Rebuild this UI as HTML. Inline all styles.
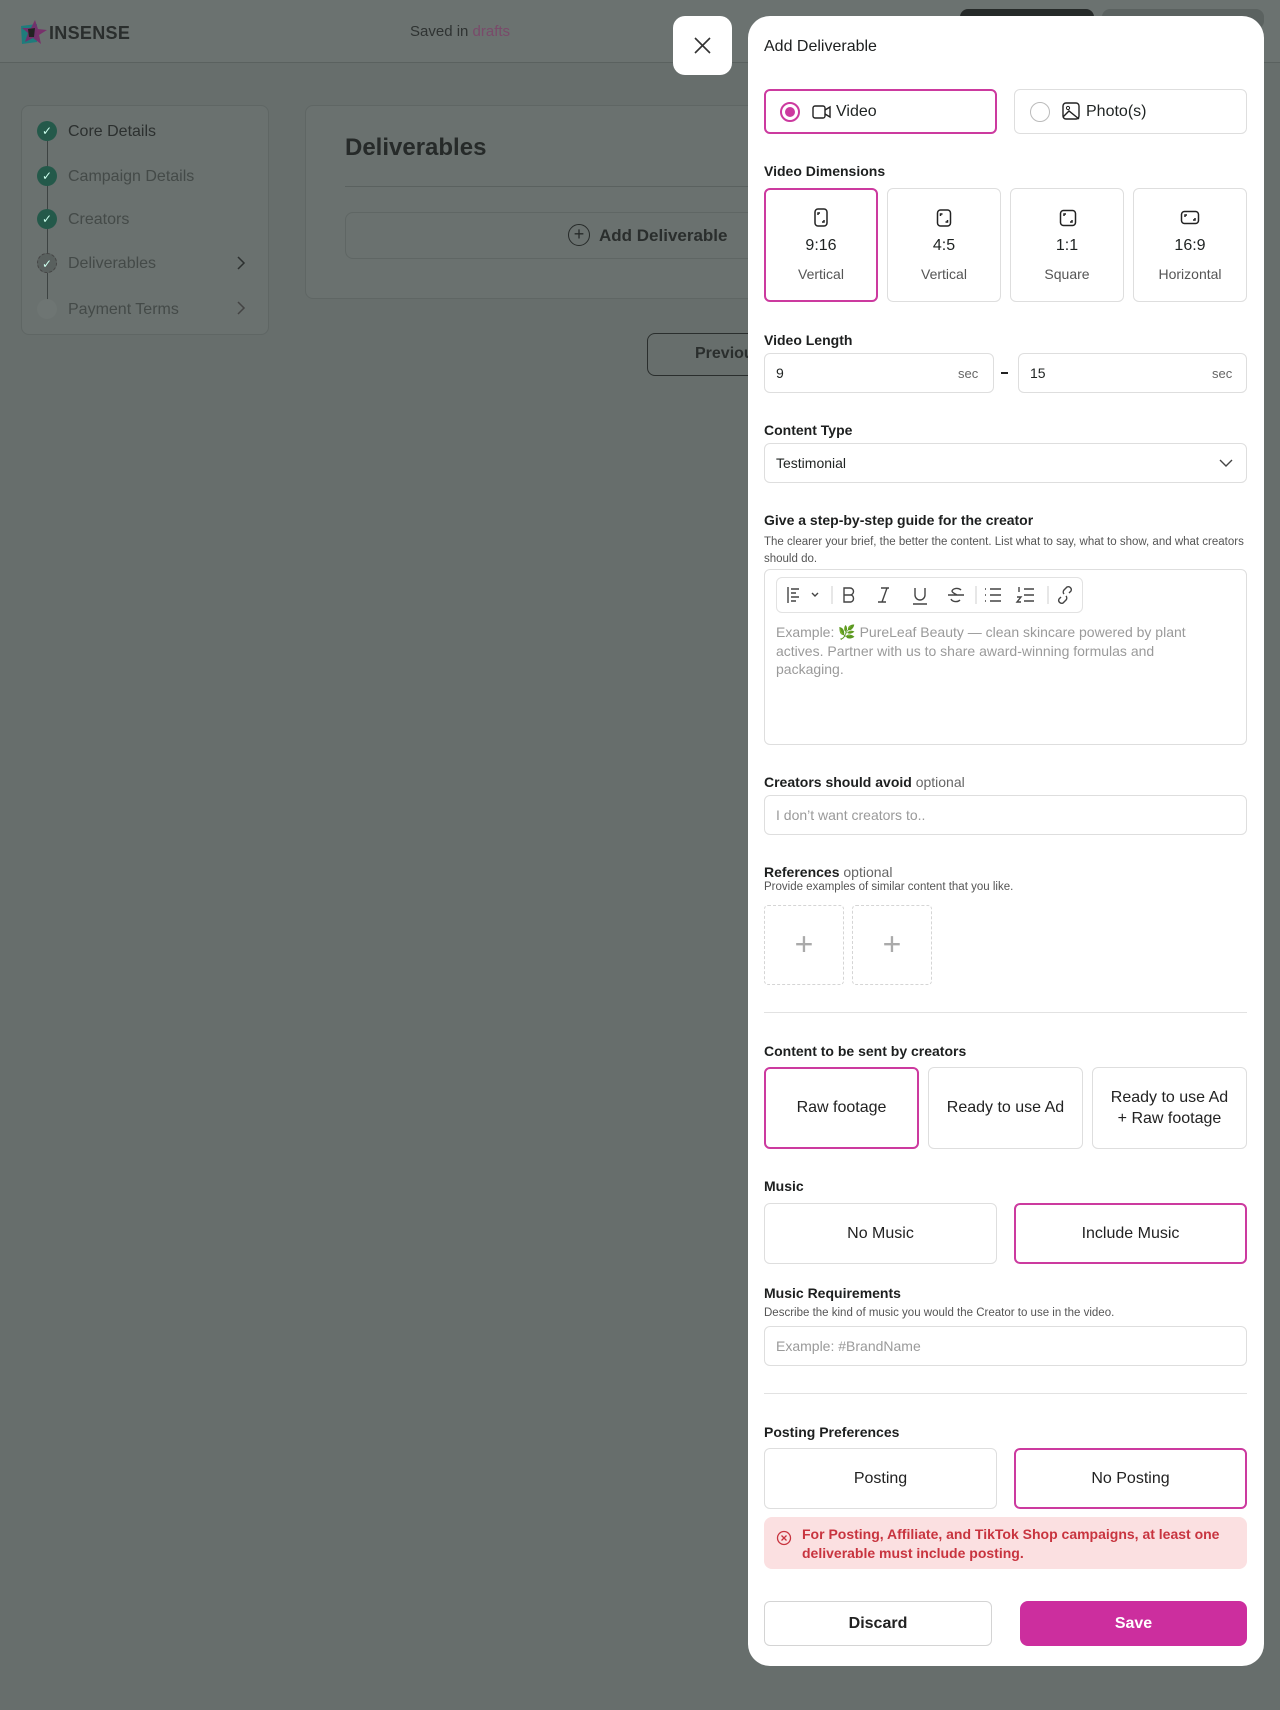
<!DOCTYPE html>
<html><head><meta charset="utf-8"><style>
*{box-sizing:border-box;margin:0;padding:0}
body{width:1280px;height:1710px;background:#676e6c;font-family:"Liberation Sans",sans-serif;position:relative;overflow:hidden;color:#1f2322}
.a{position:absolute}
.hdr{left:0;top:0;width:1280px;height:63px;background:#6b7270;border-bottom:1px solid #5a615f}
.card{background:#6a716f;border:1px solid #5f6664;border-radius:8px}
.dot{width:20px;height:20px;border-radius:50%;background:#24594a;color:#cfe;font-size:12px;text-align:center;line-height:20px}
.side{font-size:16px;color:#2c302f}
.modal{left:748px;top:16px;width:516px;height:1650px;background:#fff;border-radius:22px}
.lbl{font-size:14px;font-weight:bold;color:#1d1f1f}
.box{border:1px solid #dedede;border-radius:6px;background:#fff}
.sel{border:2px solid #cc3a9f}
.c{display:flex;align-items:center;justify-content:center;text-align:center;font-size:16px;color:#222}
.sm{font-size:11.5px;color:#555}
.ph{color:#9a9a9a}
.opt{font-weight:normal;color:#666}
</style></head><body>
<div class="a hdr"></div>
<svg class="a" style="left:19px;top:20px" width="28" height="26" viewBox="0 0 28 26"><polygon points="2,6 18,4 18,22 3,24" fill="#1f7c7c"/><polygon points="16,0 19,9 28,10 20,15 22,24 14,18 6,22 9,13 3,8 12,8" fill="#7a2a6a" opacity=".9"/><polygon points="9,9 16,8 15,17 10,17" fill="#222"/></svg>
<div class="a" style="left:49px;top:23px;font-size:18px;font-weight:bold;color:#2a2e2d;letter-spacing:.3px">INSENSE</div>
<div class="a" style="left:410px;top:23px;font-size:15px;color:#2f3332">Saved in <span style="color:#7a4a6a">drafts</span></div>
<div class="a" style="left:960px;top:9px;width:134px;height:20px;background:#262a29;border-radius:8px"></div>
<div class="a" style="left:1102px;top:9px;width:162px;height:20px;background:#5b6260;border-radius:8px"></div>

<div class="a card" style="left:21px;top:105px;width:248px;height:230px"></div>
<div class="a" style="left:47px;top:141px;width:1px;height:160px;background:#3d4342"></div>
<div class="a dot" style="left:37px;top:121px">✓</div><div class="a side" style="left:68px;top:123px">Core Details</div>
<div class="a dot" style="left:37px;top:166px">✓</div><div class="a side" style="left:68px;top:168px;color:#444a48">Campaign Details</div>
<div class="a dot" style="left:37px;top:209px">✓</div><div class="a side" style="left:68px;top:211px;color:#444a48">Creators</div>
<div class="a dot" style="left:37px;top:253px;background:#59605e;border:1px dashed #444">✓</div><div class="a side" style="left:68px;top:255px;color:#444a48">Deliverables</div>
<svg class="a" style="left:236px;top:256px" width="10" height="14"><path d="M2 1l6 6-6 6" fill="none" stroke="#2c302f" stroke-width="1.5"/></svg>
<div class="a dot" style="left:37px;top:299px;background:#6e7573"></div><div class="a side" style="left:68px;top:301px;color:#444a48">Payment Terms</div>
<svg class="a" style="left:236px;top:301px" width="10" height="14"><path d="M2 1l6 6-6 6" fill="none" stroke="#444" stroke-width="1.5"/></svg>

<div class="a card" style="left:305px;top:105px;width:500px;height:194px"></div>
<div class="a" style="left:345px;top:134px;font-size:24px;font-weight:bold;color:#262a29">Deliverables</div>
<div class="a" style="left:345px;top:186px;width:420px;height:1px;background:#5a615f"></div>
<div class="a card" style="left:345px;top:212px;width:440px;height:47px"></div>
<div class="a" style="left:568px;top:224px;width:22px;height:22px;border:1.5px solid #262a29;border-radius:50%;text-align:center;line-height:19px;font-size:18px;color:#262a29">+</div>
<div class="a" style="left:599px;top:226px;font-size:17px;font-weight:bold;color:#2a2e2d">Add Deliverable</div>
<div class="a" style="left:647px;top:333px;width:120px;height:43px;border:1.5px solid #2a2e2d;border-radius:8px"></div>
<div class="a" style="left:695px;top:345px;font-size:16px;font-weight:bold;color:#2a2e2d">Previou</div>

<div class="a" style="left:673px;top:16px;width:59px;height:59px;background:#fff;border-radius:12px"></div>
<svg class="a" style="left:693px;top:36px" width="19" height="19"><path d="M2 2L17 17M17 2L2 17" stroke="#333" stroke-width="1.6"/></svg>

<div class="a modal"></div>
<div class="a" style="left:764px;top:38px;font-size:16px;color:#1d1f1f">Add Deliverable</div>

<div class="a box sel" style="left:764px;top:89px;width:233px;height:45px"></div>
<div class="a" style="left:780px;top:102px;width:20px;height:20px;border:2px solid #cc3a9f;border-radius:50%"><div style="margin:3px;width:10px;height:10px;border-radius:50%;background:#cc3a9f"></div></div>
<svg class="a" style="left:812px;top:104px" width="20" height="16"><rect x="1" y="2" width="12" height="12" rx="2" fill="none" stroke="#222" stroke-width="1.4"/><path d="M13 6l5-3v10l-5-3" fill="none" stroke="#222" stroke-width="1.4"/></svg>
<div class="a" style="left:836px;top:103px;font-size:16px">Video</div>
<div class="a box" style="left:1014px;top:89px;width:233px;height:45px"></div>
<div class="a" style="left:1030px;top:102px;width:20px;height:20px;border:1.5px solid #bbb;border-radius:50%"></div>
<svg class="a" style="left:1062px;top:102px" width="18" height="18"><rect x="1" y="1" width="16" height="16" rx="3" fill="none" stroke="#222" stroke-width="1.4"/><circle cx="6" cy="6" r="1.6" fill="none" stroke="#222"/><path d="M1 15l6-6 10 8" fill="none" stroke="#222" stroke-width="1.4"/></svg>
<div class="a" style="left:1086px;top:103px;font-size:16px">Photo(s)</div>

<div class="a lbl" style="left:764px;top:163px">Video Dimensions</div>
<div class="a box sel" style="left:764px;top:188px;width:114px;height:114px"></div>
<div class="a box" style="left:887px;top:188px;width:114px;height:114px"></div>
<div class="a box" style="left:1010px;top:188px;width:114px;height:114px"></div>
<div class="a box" style="left:1133px;top:188px;width:114px;height:114px"></div>
<svg class="a" style="left:813px;top:208px" width="16" height="20"><rect x="2" y="1" width="12" height="17" rx="3" fill="none" stroke="#222" stroke-width="1.5"/><path d="M5 7V5h2M11 12v2H9" fill="none" stroke="#222" stroke-width="1.5"/></svg>
<svg class="a" style="left:936px;top:208px" width="16" height="20"><rect x="1.5" y="2" width="13" height="16" rx="3" fill="none" stroke="#222" stroke-width="1.5"/><path d="M4.5 8V6h2M11.5 12v2h-2" fill="none" stroke="#222" stroke-width="1.5"/></svg>
<svg class="a" style="left:1059px;top:209px" width="18" height="18"><rect x="1.5" y="1.5" width="15" height="15" rx="3" fill="none" stroke="#222" stroke-width="1.5"/><path d="M5 7V5h2M13 11v2h-2" fill="none" stroke="#222" stroke-width="1.5"/></svg>
<svg class="a" style="left:1180px;top:210px" width="20" height="16"><rect x="1.5" y="1.5" width="17" height="12" rx="3" fill="none" stroke="#222" stroke-width="1.5"/><path d="M5 7V5h2M15 8v2h-2" fill="none" stroke="#222" stroke-width="1.5"/></svg>
<div class="a" style="left:764px;top:237px;width:114px;text-align:center;font-size:16px">9:16</div>
<div class="a" style="left:887px;top:237px;width:114px;text-align:center;font-size:16px">4:5</div>
<div class="a" style="left:1010px;top:237px;width:114px;text-align:center;font-size:16px">1:1</div>
<div class="a" style="left:1133px;top:237px;width:114px;text-align:center;font-size:16px">16:9</div>
<div class="a" style="left:764px;top:266px;width:114px;text-align:center;font-size:14px;color:#555">Vertical</div>
<div class="a" style="left:887px;top:266px;width:114px;text-align:center;font-size:14px;color:#555">Vertical</div>
<div class="a" style="left:1010px;top:266px;width:114px;text-align:center;font-size:14px;color:#555">Square</div>
<div class="a" style="left:1133px;top:266px;width:114px;text-align:center;font-size:14px;color:#555">Horizontal</div>

<div class="a lbl" style="left:764px;top:332px">Video Length</div>
<div class="a box" style="left:764px;top:353px;width:230px;height:40px"></div>
<div class="a" style="left:776px;top:365px;font-size:14px">9</div>
<div class="a" style="left:958px;top:366px;font-size:13px;color:#666">sec</div>
<div class="a" style="left:1001px;top:372px;width:7px;height:2px;background:#222"></div>
<div class="a box" style="left:1018px;top:353px;width:229px;height:40px"></div>
<div class="a" style="left:1030px;top:365px;font-size:14px">15</div>
<div class="a" style="left:1212px;top:366px;font-size:13px;color:#666">sec</div>

<div class="a lbl" style="left:764px;top:422px">Content Type</div>
<div class="a box" style="left:764px;top:443px;width:483px;height:40px"></div>
<div class="a" style="left:776px;top:455px;font-size:14px">Testimonial</div>
<svg class="a" style="left:1219px;top:458px" width="14" height="10"><path d="M1 2l6 6 6-6" fill="none" stroke="#444" stroke-width="1.4"/></svg>

<div class="a lbl" style="left:764px;top:512px">Give a step-by-step guide for the creator</div>
<div class="a sm" style="left:764px;top:534px;width:483px;line-height:16.5px">The clearer your brief, the better the content. List what to say, what to show, and what creators should do.</div>
<div class="a box" style="left:764px;top:569px;width:483px;height:176px"></div>
<div class="a box" style="left:776px;top:577px;width:307px;height:36px;border-color:#e2e2e2"></div>
<svg class="a" style="left:776px;top:577px" width="307" height="36" fill="none" stroke="#444" stroke-width="1.4">
<path d="M12 10v16M15 12h8M15 16h5M15 20h8M15 24h5"/><path d="M36 16l3 3 3-3"/>
<path d="M56 9v18M200 9v18M272 9v18" stroke="#ddd"/>
<path d="M68 11h6a3.5 3.5 0 0 1 0 7h-6zM68 18h7a3.7 3.7 0 0 1 0 7h-7z"/>
<path d="M105 11h8M102 25h8M111 11l-5 14"/>
<path d="M139 11v7a5 5 0 0 0 10 0v-7M137 27h14"/>
<path d="M172 18h16M185 13a5 3.5 0 0 0-9 1c0 2 4 3 5 4M175 22a5 3.5 0 0 0 9 1"/>
<path d="M214 12h11M214 18h11M214 24h11M209 12h1M209 18h1M209 24h1"/>
<path d="M248 12h10M248 18h10M248 24h10M243 10v5M241 20h4l-4 5h4"/>
<path d="M285 20l-2 2a3 3 0 0 0 4 4l3-3a3 3 0 0 0 0-4M293 16l2-2a3 3 0 0 0-4-4l-3 3a3 3 0 0 0 0 4"/>
</svg>
<div class="a ph" style="left:776px;top:623px;width:430px;font-size:14px;line-height:18.5px">Example: 🌿 PureLeaf Beauty — clean skincare powered by plant actives. Partner with us to share award-winning formulas and packaging.</div>

<div class="a lbl" style="left:764px;top:774px">Creators should avoid <span class="opt">optional</span></div>
<div class="a box" style="left:764px;top:795px;width:483px;height:40px"></div>
<div class="a ph" style="left:776px;top:807px;font-size:14px">I don’t want creators to..</div>

<div class="a lbl" style="left:764px;top:864px">References <span class="opt">optional</span></div>
<div class="a sm" style="left:764px;top:881px">Provide examples of similar content that you like.</div>
<div class="a" style="left:764px;top:905px;width:80px;height:80px;border:1px dashed #d5d5d5;border-radius:4px;text-align:center;line-height:76px;font-size:32px;color:#aaa;font-weight:300">+</div>
<div class="a" style="left:852px;top:905px;width:80px;height:80px;border:1px dashed #d5d5d5;border-radius:4px;text-align:center;line-height:76px;font-size:32px;color:#aaa;font-weight:300">+</div>
<div class="a" style="left:764px;top:1012px;width:483px;height:1px;background:#e2e2e2"></div>

<div class="a lbl" style="left:764px;top:1043px">Content to be sent by creators</div>
<div class="a box sel c" style="left:764px;top:1067px;width:155px;height:82px">Raw footage</div>
<div class="a box c" style="left:928px;top:1067px;width:155px;height:82px">Ready to use Ad</div>
<div class="a box c" style="left:1092px;top:1067px;width:155px;height:82px;line-height:21px">Ready to use Ad<br>+ Raw footage</div>

<div class="a lbl" style="left:764px;top:1178px">Music</div>
<div class="a box c" style="left:764px;top:1203px;width:233px;height:61px">No Music</div>
<div class="a box sel c" style="left:1014px;top:1203px;width:233px;height:61px">Include Music</div>
<div class="a lbl" style="left:764px;top:1285px">Music Requirements</div>
<div class="a sm" style="left:764px;top:1307px">Describe the kind of music you would the Creator to use in the video.</div>
<div class="a box" style="left:764px;top:1326px;width:483px;height:40px"></div>
<div class="a ph" style="left:776px;top:1338px;font-size:14px">Example: #BrandName</div>
<div class="a" style="left:764px;top:1393px;width:483px;height:1px;background:#e2e2e2"></div>

<div class="a lbl" style="left:764px;top:1424px">Posting Preferences</div>
<div class="a box c" style="left:764px;top:1448px;width:233px;height:61px">Posting</div>
<div class="a box sel c" style="left:1014px;top:1448px;width:233px;height:61px">No Posting</div>
<div class="a" style="left:764px;top:1517px;width:483px;height:52px;background:#fbe0e1;border-radius:8px"></div>
<svg class="a" style="left:776px;top:1530px" width="16" height="16"><circle cx="8" cy="8" r="6.5" fill="none" stroke="#c8343f" stroke-width="1.3"/><path d="M5.5 5.5l5 5M10.5 5.5l-5 5" stroke="#c8343f" stroke-width="1.3"/></svg>
<div class="a" style="left:802px;top:1525px;width:430px;font-size:14px;line-height:18.5px;color:#c8343f;font-weight:bold">For Posting, Affiliate, and TikTok Shop campaigns, at least one deliverable must include posting.</div>

<div class="a box c" style="left:764px;top:1601px;width:228px;height:45px;font-weight:bold;border-color:#d4d4d4">Discard</div>
<div class="a c" style="left:1020px;top:1601px;width:227px;height:45px;background:#cc2e9e;border-radius:8px;color:#fff;font-weight:bold">Save</div>
</body></html>
